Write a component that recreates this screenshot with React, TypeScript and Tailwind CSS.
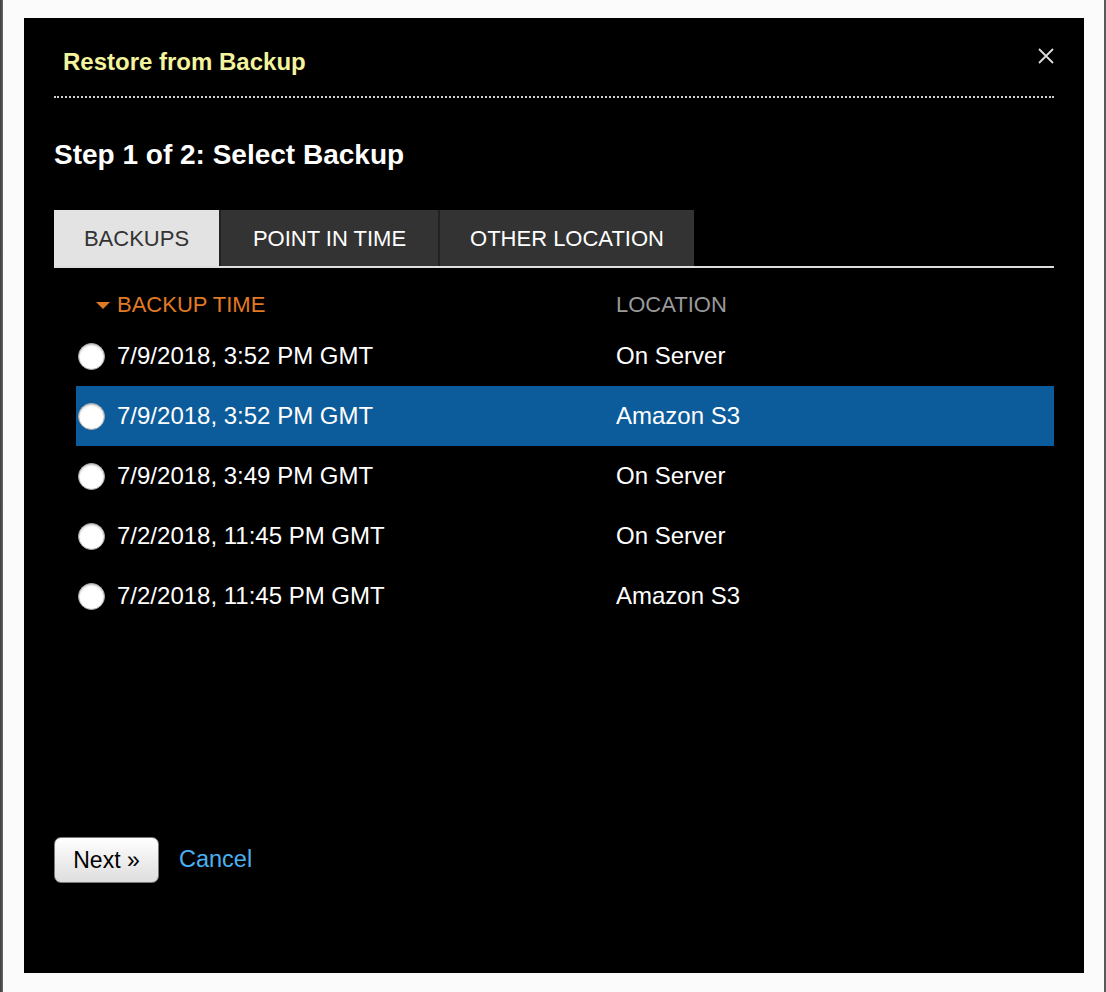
import { useState } from "react";

type Backup = {
  id: number;
  time: string;
  location: string;
};

const backups: Backup[] = [
  { id: 1, time: "7/9/2018, 3:52 PM GMT", location: "On Server" },
  { id: 2, time: "7/9/2018, 3:52 PM GMT", location: "Amazon S3" },
  { id: 3, time: "7/9/2018, 3:49 PM GMT", location: "On Server" },
  { id: 4, time: "7/2/2018, 11:45 PM GMT", location: "On Server" },
  { id: 5, time: "7/2/2018, 11:45 PM GMT", location: "Amazon S3" },
];

const tabs = [
  { key: "backups", label: "BACKUPS", width: "w-[165px]" },
  { key: "pit", label: "POINT IN TIME", width: "w-[219px]" },
  { key: "other", label: "OTHER LOCATION", width: "w-[256px]" },
];

export default function App() {
  const [activeTab, setActiveTab] = useState("backups");
  const [hovered] = useState(2);
  const [selected, setSelected] = useState<number | null>(null);

  return (
    <div className="flex h-[992px] w-[1106px] bg-[#fbfbfb] font-['Liberation_Sans',Arial,sans-serif]">
      {/* left window edge */}
      <div className="w-[3px] bg-gradient-to-r from-[#3c3c3c] to-[#6a6a6a]" />

      <div className="flex-1 pl-[21px] pt-[18px]">
        {/* Dialog */}
        <div className="flex h-[955px] w-[1060px] flex-col bg-black px-[30px] pt-[29px]">
          {/* Header */}
          <div className="flex items-start justify-between">
            <h2 className="ml-[9px] text-[24px] font-bold leading-[30px] text-[#f4f49e]">
              Restore from Backup
            </h2>
            <button type="button" className="mt-[1px] text-[#dcdcdc]" aria-label="Close">
              <svg width="16" height="16" viewBox="0 0 16 16">
                <path d="M1 1 L15 15 M15 1 L1 15" stroke="currentColor" strokeWidth="1.8" />
              </svg>
            </button>
          </div>
          <div className="mt-[19px] border-t-2 border-dotted border-[#cfcfcf]" />

          {/* Step */}
          <h3 className="mt-[41px] text-[28px] font-bold leading-[32px] text-white">
            Step 1 of 2: Select Backup
          </h3>

          {/* Tabs */}
          <div className="mt-[39px] flex border-b-2 border-[#dedede]">
            {tabs.map((t, i) => {
              const active = t.key === activeTab;
              return (
                <button
                  key={t.key}
                  type="button"
                  onClick={() => setActiveTab(t.key)}
                  className={`flex h-[56px] items-center justify-center text-[22px] ${t.width} ${
                    active
                      ? "bg-[#e3e3e3] text-[#333]"
                      : `bg-[#333] text-white ${i > 0 ? "border-l-2 border-[#222]" : ""}`
                  }`}
                >
                  {t.label}
                </button>
              );
            })}
          </div>

          {/* Table */}
          <div className="ml-[22px]">
            <div className="grid h-[58px] grid-cols-[540px_1fr] items-center pt-[16px] text-[22px] leading-[24px]">
              <div className="flex items-center pl-[20px] text-[#e07a24]">
                <svg width="14" height="7" viewBox="0 0 14 7" className="mr-[7px]">
                  <path d="M0 0 H14 L7 7 Z" fill="currentColor" />
                </svg>
                BACKUP TIME
              </div>
              <div className="text-[#9a9a9a]">LOCATION</div>
            </div>

            {backups.map((b) => (
              <label
                key={b.id}
                onClick={() => setSelected(b.id)}
                className={`grid h-[60px] cursor-pointer grid-cols-[540px_1fr] items-center text-[24px] text-white ${
                  b.id === hovered ? "bg-[#0c5c9b]" : ""
                }`}
              >
                <div className="flex items-center pl-[2px]">
                  <span className="mr-[12px] flex h-[27px] w-[27px] items-center justify-center rounded-full border border-[#a8a8a8] bg-white shadow-[inset_0_1px_2px_rgba(0,0,0,0.25)]">
                    {selected === b.id && <span className="h-[11px] w-[11px] rounded-full bg-[#333]" />}
                  </span>
                  {b.time}
                </div>
                <div>{b.location}</div>
              </label>
            ))}
          </div>

          {/* Actions */}
          <div className="mt-[211px] flex items-center">
            <button
              type="button"
              className="h-[46px] w-[105px] rounded-[7px] border border-[#7a7a7a] bg-gradient-to-b from-white to-[#dedede] text-[23px] text-black"
            >
              Next »
            </button>
            <a href="#" className="ml-[20px] text-[23.5px] text-[#4cb0f0]">
              Cancel
            </a>
          </div>
        </div>
      </div>

      {/* right window edge */}
      <div className="w-[2px] bg-[#5a5a5a]" />
    </div>
  );
}
